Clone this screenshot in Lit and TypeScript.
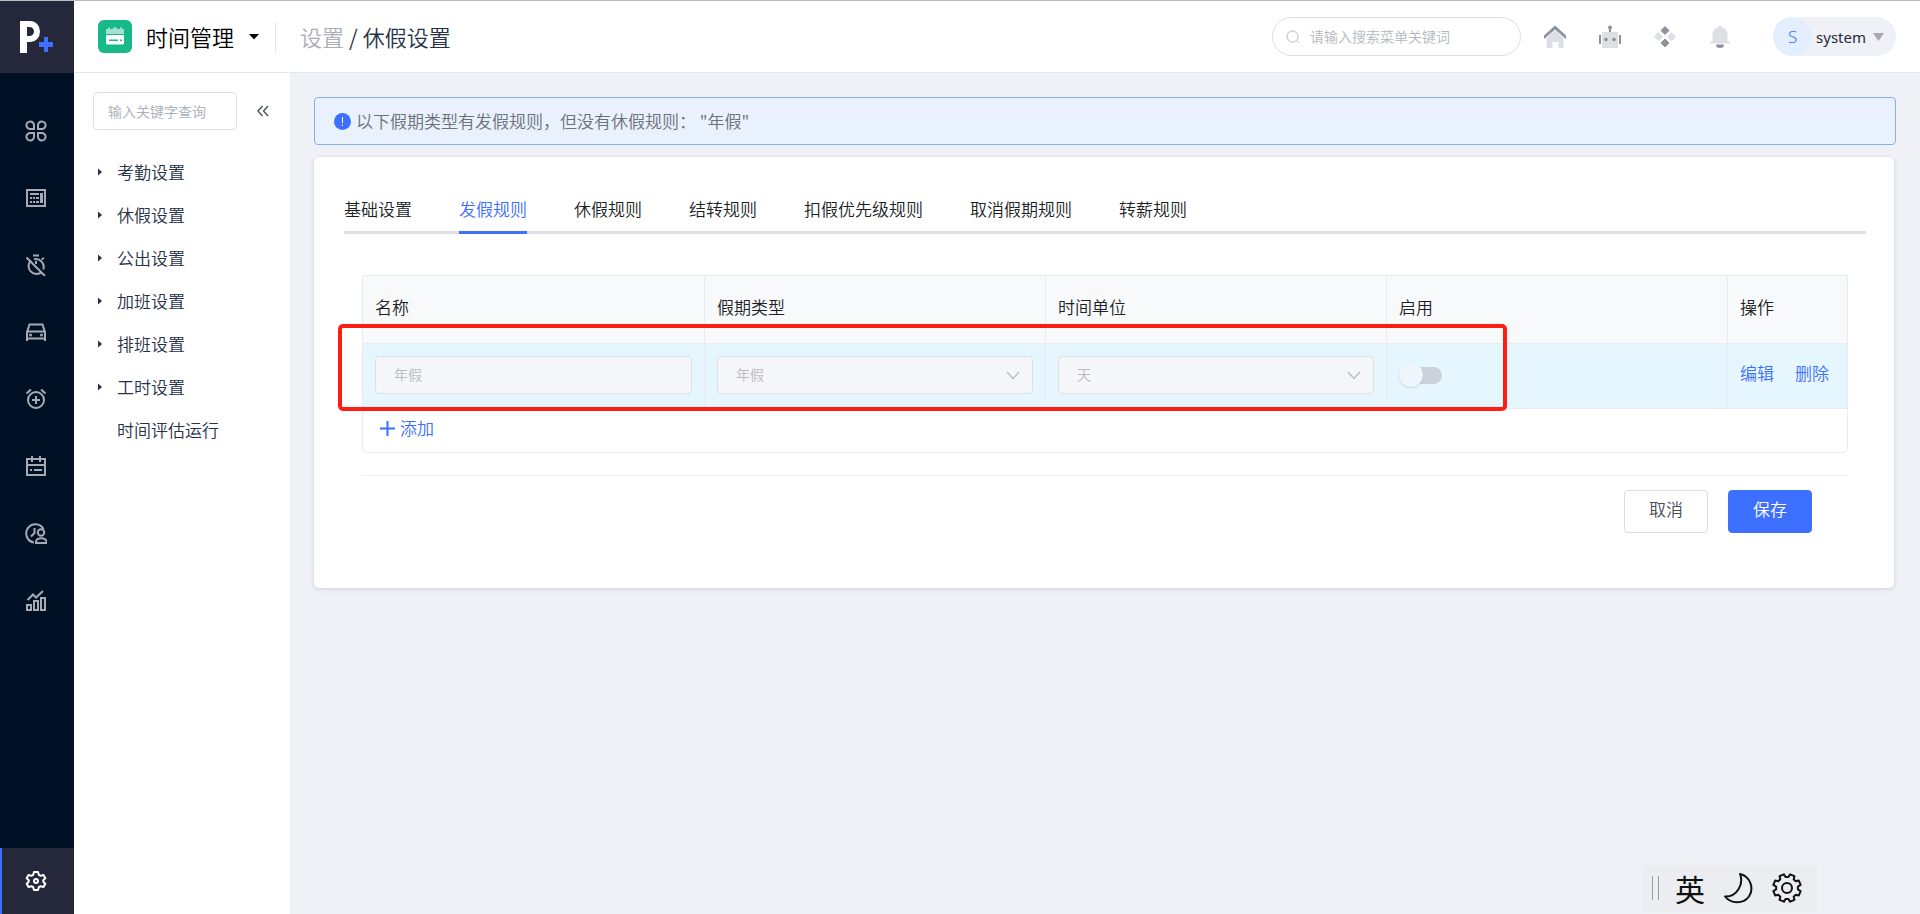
import { LitElement, html, css, svg } from "lit";
import { customElement, state } from "lit/decorators.js";
import { classMap } from "lit/directives/class-map.js";

const ICONS = {
  apps: svg`<g fill="none" stroke="currentColor" stroke-width="2"><path d="M9 9H5.400A3.800 3.800 0 1 1 9 5.200z M13 9V5.200A3.800 3.800 0 1 1 16.600 9z M9 13V16.800A3.800 3.800 0 1 1 5.400 13z M13 13H16.600A3.800 3.800 0 1 1 13 16.800z"/></g>`,
  sheet: svg`<path fill="none" stroke="currentColor" stroke-width="2" d="M2 3h18v16H2z"/><path fill="currentColor" d="M5 6h9v2H5zM15 6h3v10h-3zM5 10h2v2H5zM8 10h2v2H8zM11 10h3v2h-3zM5 14h2v2H5zM8 14h2v2H8zM11 14h3v2h-3z"/>`,
  timerOff: svg`<g fill="none" stroke="currentColor" stroke-width="2"><path d="M8 1.500h6M6 6.200A8 8 0 0 0 16.800 18M9 5.200A8 8 0 0 1 18.300 15.500M1.500 3.500 20 22M16.500 5.500 19 4M11 7v3"/></g>`,
  car: svg`<g fill="none" stroke="currentColor" stroke-width="2"><path d="M2 20v-9l2.500-7.500h13L20 11v9M2 10.500h18M2 17.500h18"/></g><circle cx="5.500" cy="14" r="1.500" fill="currentColor"/><circle cx="16.500" cy="14" r="1.500" fill="currentColor"/>`,
  alarm: svg`<g fill="none" stroke="currentColor" stroke-width="2"><circle cx="11" cy="12" r="8"/><path d="M11 8v8M7 12h8M1.500 5.500 6 1.500M20.500 5.500 16 1.500"/></g>`,
  calendar: svg`<g fill="none" stroke="currentColor" stroke-width="2"><path d="M2 4h18v16H2zM2 10h18M7 1v6M15 1v6M9 15h8M5 15h2"/></g>`,
  person: svg`<g fill="none" stroke="currentColor" stroke-width="2"><path d="M9 20.500A9.200 9.200 0 1 1 18.500 7M9.500 6v5L6 14.500"/><circle cx="16" cy="10.500" r="3.200"/><path d="M11 21v-1c0-5 10.500-5 10.500 0v1z"/></g>`,
  chart: svg`<g fill="none" stroke="currentColor" stroke-width="2"><path d="M2 16h4v5H2zM9 12h4v9H9zM16 9h4v12h-4zM2.500 11 8 5.500l3 3 7-6.500"/></g>`,
};

const MENU = ["考勤设置", "休假设置", "公出设置", "加班设置", "排班设置", "工时设置"];
const TABS = ["基础设置", "发假规则", "休假规则", "结转规则", "扣假优先级规则", "取消假期规则", "转薪规则"];

@customElement("app-nav")
class AppNav extends LitElement {
  static styles = css`
    :host { display: flex; flex-direction: column; background: #001125; }
    .logo { height: 72px; background: #25283b; }
    .logo svg { display: block; }
    .list { flex: 1; display: flex; flex-direction: column; padding-top: 24px; }
    .item { height: 67px; display: flex; align-items: center; justify-content: center; padding-right: 2px; color: #a6abb3; }
    .foot { height: 66px; display: flex; align-items: center; justify-content: center; padding-right: 4px; color: #fff; background: #25283b; border-left: 2px solid #3d70ff; }
  `;
  render() {
    return html`
      <div class="logo">
        <svg width="74" height="72" viewBox="0 0 74 72" role="img" aria-label="P+">
          <path fill="#fff" fill-rule="evenodd" d="M20 20h10.500a9.500 10.500 0 0 1 0 21H27v11h-7zM27 26v9h2.500a4.500 4.500 0 0 0 0-9z" />
          <path fill="#3d70ff" d="M44 36h4v5h5v5h-5v5h-4v-5h-5v-5h5z" />
        </svg>
      </div>
      <nav class="list" aria-label="模块">
        ${Object.entries(ICONS).map(([key, art]) => html`<a class="item" href="#${key}" aria-label=${key}><svg width="22" height="22" viewBox="0 0 22 22">${art}</svg></a>`)}
      </nav>
      <a class="foot" href="#settings" aria-label="设置">
        <svg width="22" height="22" viewBox="0 0 22 22" fill="none" stroke="currentColor" stroke-width="2" stroke-linejoin="round">
          <path d="M9 2h4l.8 2.800 1.800 1 2.900-.8 1.800 3.300-2 2v1.400l2 2-1.800 3.300-2.900-.8-1.800 1L13 20H9l-.8-2.800-1.800-1-2.900.8-1.800-3.300 2-2v-1.400l-2-2L3.500 5l2.900.8 1.800-1z" />
          <circle cx="11" cy="11" r="2" />
        </svg>
      </a>
    `;
  }
}

@customElement("app-header")
class AppHeader extends LitElement {
  static styles = css`
    :host { display: flex; align-items: center; height: 71px; padding: 0 24px; background: #fff; border-bottom: 1px solid #e4e6eb; }
    svg { display: block; flex: none; }
    .module { display: flex; align-items: center; gap: 14px; padding: 0; border: 0; background: none; font: inherit; font-size: 22px; line-height: 32px; color: #000; }
    .module span { padding-bottom: 2px; }
    .caret { margin-left: 1px; }
    .crumbs { display: flex; gap: 5px; margin-left: 16px; padding: 0 0 2px 24px; border-left: 1px solid #e4e6eb; font-size: 22px; line-height: 28px; color: #273148; }
    .crumbs a { color: #a9adb6; text-decoration: none; }
    .tools { display: flex; align-items: center; margin-left: auto; }
    .search { box-sizing: border-box; width: 249px; height: 39px; display: flex; align-items: center; gap: 10px; padding: 0 13px; border: 1px solid #dcdee2; border-radius: 20px; }
    .search input { flex: 1; min-width: 0; padding: 0 0 2px; border: 0; outline: 0; background: none; font: inherit; font-size: 14px; line-height: 20px; }
    .search input::placeholder { color: #b4b8be; opacity: 1; }
    .icons { display: flex; gap: 31px; margin: 0 41px 0 22px; }
    .icons button { padding: 0; border: 0; background: none; }
    .user { display: flex; align-items: center; height: 39px; padding: 0 12px 0 0; border: 0; border-radius: 20px; background: #eff1f7; font: 15px/24px "Noto Sans", "Noto Sans CJK SC", sans-serif; color: #1f2b3d; }
    .avatar { width: 39px; height: 39px; margin-right: 4px; border-radius: 50%; background: #e3efff; color: #3d70ff; line-height: 39px; font-size: 17px; font-weight: 300; }
    .user svg { margin-left: 7px; }
  `;
  render() {
    return html`
      <button class="module">
        <svg width="34" height="34" viewBox="0 0 34 34">
          <rect width="34" height="33" y="0" rx="6" fill="#16b987" />
          <path fill="#a2e3cf" d="M8 14V10a1 1 0 0 1 1-1h1V7.500h2V9h3V7.500h4V9h3V7.500h2V9h1a1 1 0 0 1 1 1v4z" />
          <path fill="#fff" fill-rule="evenodd" d="M8 15h18v8a1.500 1.500 0 0 1-1.500 1.500h-15A1.500 1.500 0 0 1 8 23zM11 19.500V21h9v-1.500zM22 19.500V21h2v-1.500z" />
        </svg>
        <span>时间管理</span>
        <svg class="caret" width="10" height="6" viewBox="0 0 10 6"><path d="M0 0h10L5 5.500z" /></svg>
      </button>
      <nav class="crumbs" aria-label="路径"><a href="#settings">设置</a><span>/</span><span>休假设置</span></nav>
      <div class="tools">
        <label class="search">
          <svg width="14" height="14" viewBox="0 0 14 14" fill="none" stroke="#b4b8be"><circle cx="6.500" cy="6.500" r="5.500" /><path d="m10.500 10.500 2 2" /></svg>
          <input type="text" aria-label="搜索菜单" placeholder="请输入搜索菜单关键词" />
        </label>
        <div class="icons">
          <button aria-label="首页"><svg width="24" height="24" viewBox="0 0 24 24"><path fill="#dddfe4" d="M3.500 12.500 12 5.500 20.500 12.500v10.500h-5v-6h-6v6h-6z" /><path fill="#8c929d" d="M12 0.500 23 10.500V14L12 4.500 1 14v-3.500z" /></svg></button>
          <button aria-label="助手"><svg width="24" height="24" viewBox="0 0 24 24"><path fill="#dddfe4" d="M4 7h16v16H4z" /><path fill="#8c929d" d="M1 10h2v9H1zM21 10h2v9h-2zM11 2h2v5h-2z" /><g fill="#8c929d"><circle cx="12" cy="2.500" r="2" /><circle cx="8" cy="14.500" r="1.800" /><circle cx="16" cy="14.500" r="1.800" /></g></svg></button>
          <button aria-label="应用"><svg width="24" height="24" viewBox="0 0 24 24"><path fill="#8c929d" stroke="#8c929d" stroke-linejoin="round" d="m12 1.500 4 4-4 4-4-4zM12 14l4 4-4 4-4-4z" /><path fill="#dddfe4" stroke="#dddfe4" stroke-linejoin="round" d="m5.500 7.700 4 4-4 4-4-4zM18.500 7.700l4 4-4 4-4-4z" /></svg></button>
          <button aria-label="通知"><svg width="24" height="24" viewBox="0 0 24 24"><path fill="#dddfe4" d="M11 0.500h2V2c4 .5 6.500 3.500 6.500 7v7.500H22v2H2v-2h2.500V9c0-3.500 2.500-6.500 6.500-7z" /><path fill="#8c929d" d="M8 19.500h8a4 3.500 0 0 1-8 0z" /></svg></button>
        </div>
        <button class="user"><span class="avatar">S</span>system<svg width="11" height="8" viewBox="0 0 11 8"><path fill="#a4a8b0" d="M0 0h11L5.500 8z" /></svg></button>
      </div>
    `;
  }
}

@customElement("app-side")
class AppSide extends LitElement {
  static styles = css`
    :host { display: block; padding: 19px 19px 0; background: #fff; }
    .top { display: flex; align-items: center; justify-content: space-between; }
    .filter { box-sizing: border-box; width: 144px; height: 38px; padding: 0 14px; border: 1px solid #dfe1e6; border-radius: 4px; outline: 0; font: inherit; font-size: 14px; }
    .filter::placeholder { color: #a9adb6; opacity: 1; }
    .fold { padding: 0 2px; border: 0; background: none; }
    .fold svg { display: block; }
    ul { margin: 20px 0 0; padding: 0; list-style: none; }
    a { display: grid; grid-template-columns: 19px 1fr; align-items: center; height: 43px; padding-left: 5px; font-size: 17px; line-height: 24px; color: #273148; text-decoration: none; }
    a span { grid-column: 2; }
  `;
  render() {
    return html`
      <div class="top">
        <input class="filter" type="text" aria-label="关键字" placeholder="输入关键字查询" />
        <button class="fold" aria-label="收起"><svg width="12" height="12" viewBox="0 0 12 12" fill="none" stroke="#4a5160" stroke-width="1.400"><path d="M5.500 1 1 6l4.500 5M11 1 6.500 6l4.500 5" /></svg></button>
      </div>
      <ul>
        ${MENU.map((name) => html`<li><a href="#"><svg width="4" height="8" viewBox="0 0 4 8"><path fill="#273148" d="M0 0.500 4 4 0 7.500z" /></svg><span>${name}</span></a></li>`)}
        <li><a href="#"><span>时间评估运行</span></a></li>
      </ul>
    `;
  }
}

@customElement("leave-rules")
class LeaveRules extends LitElement {
  @state() private active = 1;

  static styles = css`
    :host { display: block; padding: 24px; font-size: 17px; line-height: 26px; }
    svg { display: block; flex: none; }
    button { font: inherit; }
    .alert { display: flex; align-items: center; gap: 5px; height: 46px; padding: 0 19px; border: 1px solid #85aef2; border-radius: 4px; background: #e9f1fc; color: #6b707a; }
    .alert span { white-space: pre; }
    .card { margin: 12px 2px 0 0; padding: 37px 28px 55px 30px; border-radius: 5px; background: #fff; box-shadow: 0 1px 4px rgba(30, 40, 70, 0.18); }
    .tabs { display: flex; gap: 47px; border-bottom: 3px solid #dedfe4; }
    .tab { margin-bottom: -3px; padding: 2px 0 9px; border: 0; border-bottom: 3px solid transparent; background: none; color: #1c1f26; }
    .tab.on { color: #3d70ff; border-color: #3d70ff; }
    .body { padding: 41px 18px 0; }
    .frame { position: relative; border: 1px solid #e9ebf2; border-radius: 0 0 5px 5px; }
    table { width: 100%; table-layout: fixed; border-collapse: separate; border-spacing: 0; }
    th, td { box-sizing: border-box; padding: 0 12px 6px; border-bottom: 1px solid #e9ebf0; text-align: left; font-weight: inherit; }
    th + th, td + td { border-left: 1px solid #e9ebf0; }
    th { height: 68px; background: #f8f9fb; color: #1c1f26; }
    td { height: 65px; padding-bottom: 2px; background: #e5f6ff; }
    .ops { width: 120px; }
    .field { display: block; position: relative; }
    .field input, .field select { box-sizing: border-box; display: block; width: 100%; height: 38px; padding: 0 18px 2px; border: 1px solid #dcdfe4; border-radius: 4px; background: #f4f6f8; font: inherit; font-size: 14px; color: #b8bcc2; opacity: 1; appearance: none; }
    .field svg { position: absolute; right: 13px; top: 15px; }
    .switch { appearance: none; display: block; width: 43px; height: 17px; margin: 0; border-radius: 9px; background: #cbd2da; }
    .switch::before { content: ""; display: block; width: 24px; height: 24px; margin-top: -4px; border-radius: 50%; background: #eef6fb; box-shadow: 0 1px 2px rgba(60, 90, 120, 0.2); }
    .links { display: flex; gap: 21px; padding-bottom: 5px; }
    .links a { color: #3d70ff; text-decoration: none; white-space: nowrap; }
    .add { display: flex; align-items: center; gap: 5px; height: 43px; padding: 0 17px 5px; border: 0; background: none; color: #3d70ff; }
    .mark { position: absolute; left: -25px; right: 340px; top: 48px; height: 79px; border: 4px solid #ff1e12; border-radius: 5px; pointer-events: none; }
    .actions { display: flex; justify-content: flex-end; gap: 20px; margin-top: 22px; padding: 14px 36px 0; border-top: 1px solid #f0f1f4; }
    .btn { box-sizing: border-box; width: 84px; height: 43px; padding: 0 0 5px; border: 1px solid #dcdee2; border-radius: 4px; background: #fff; color: #4a4d55; }
    .btn.primary { border-color: #3d70ff; background: #3d70ff; color: #fff; }
  `;

  private picker(label: string, value: string) {
    return html`<label class="field"><select disabled aria-label=${label}><option>${value}</option></select>
      <svg width="14" height="9" viewBox="0 0 14 9" fill="none" stroke="#b8bcc2" stroke-width="1.300"><path d="m1 1 6 6.500L13 1" /></svg></label>`;
  }

  render() {
    return html`
      <div class="alert" role="alert">
        <svg width="17" height="17" viewBox="0 0 17 17"><circle cx="8.500" cy="8.500" r="8.500" fill="#3d70ff" /><path fill="#fff" d="M8 4h1v6H8zM8 11.500h1V13H8z" /></svg>
        <span>以下假期类型有发假规则，但没有休假规则： "年假"</span>
      </div>
      <section class="card">
        <div class="tabs" role="tablist">
          ${TABS.map((t, i) => html`<button role="tab" aria-selected=${i === this.active} class=${classMap({ tab: true, on: i === this.active })} @click=${() => (this.active = i)}>${t}</button>`)}
        </div>
        <div class="body">
          <div class="frame">
            <table>
              <thead><tr><th>名称</th><th>假期类型</th><th>时间单位</th><th>启用</th><th class="ops">操作</th></tr></thead>
              <tbody>
                <tr>
                  <td><label class="field"><input type="text" aria-label="名称" value="年假" disabled /></label></td>
                  <td>${this.picker("假期类型", "年假")}</td>
                  <td>${this.picker("时间单位", "天")}</td>
                  <td><input class="switch" type="checkbox" role="switch" aria-label="启用" disabled /></td>
                  <td><div class="links"><a href="#edit">编辑</a><a href="#delete">删除</a></div></td>
                </tr>
              </tbody>
            </table>
            <button class="add"><svg width="15" height="15" viewBox="0 0 15 15"><path fill="#3d70ff" d="M6.500 0h2v6.500H15v2H8.500V15h-2V8.500H0v-2h6.500z" /></svg>添加</button>
            <div class="mark"></div>
          </div>
          <div class="actions">
            <button class="btn">取消</button>
            <button class="btn primary">保存</button>
          </div>
        </div>
      </section>
    `;
  }
}

@customElement("ime-bar")
class ImeBar extends LitElement {
  static styles = css`
    :host { box-sizing: border-box; display: flex; align-items: center; height: 48px; padding: 0 14px 3px 9px; background: #ecedf0; font-size: 30px; line-height: 40px; font-weight: 400; color: #111; }
    .grip { width: 3px; height: 24px; margin-right: 16px; border: solid #9a9ca0; border-width: 0 1px; padding: 0 1px; }
    svg { display: block; margin-left: 18px; }
  `;
  render() {
    let gear = "";
    for (let i = 0; i < 8; i++) {
      const a = (i * Math.PI) / 4 - Math.PI / 2 + Math.PI / 8;
      for (const [r, d] of [[11, -0.26], [14, -0.17], [14, 0.17], [11, 0.26]]) {
        gear += `${gear ? "L" : "M"}${16 + r * Math.cos(a + d)} ${16 + r * Math.sin(a + d)}`;
      }
    }
    return html`
      <span class="grip"></span><span>英</span>
      <svg width="30" height="32" viewBox="0 0 30 32" fill="none" stroke="#111" stroke-width="2" stroke-linejoin="round"><path d="M17 2c4 10-3 23-15 22.500 6 7.500 18 8 24 0C31 17 28 4.500 17 2z" /></svg>
      <svg width="32" height="32" viewBox="0 0 32 32" fill="none" stroke="#111" stroke-width="2" stroke-linejoin="round"><path d="${gear}Z" /><circle cx="16" cy="16" r="5" /></svg>
    `;
  }
}

@customElement("app-root")
class AppRoot extends LitElement {
  static styles = css`
    :host {
      box-sizing: border-box; display: grid; min-height: 100vh;
      grid-template-columns: 74px 216px minmax(0, 1fr); grid-template-rows: auto 1fr;
      border-top: 1px solid #bbbbbb; background: #f0f1f7;
      font-family: "Noto Sans CJK SC", sans-serif; font-weight: 350;
    }
    app-nav { grid-row: 1 / 3; }
    app-header { grid-column: 2 / 4; }
    ime-bar { position: fixed; right: 103px; bottom: 1px; }
  `;
  render() {
    return html`<app-nav></app-nav><app-header></app-header><app-side></app-side><leave-rules></leave-rules><ime-bar></ime-bar>`;
  }
}
